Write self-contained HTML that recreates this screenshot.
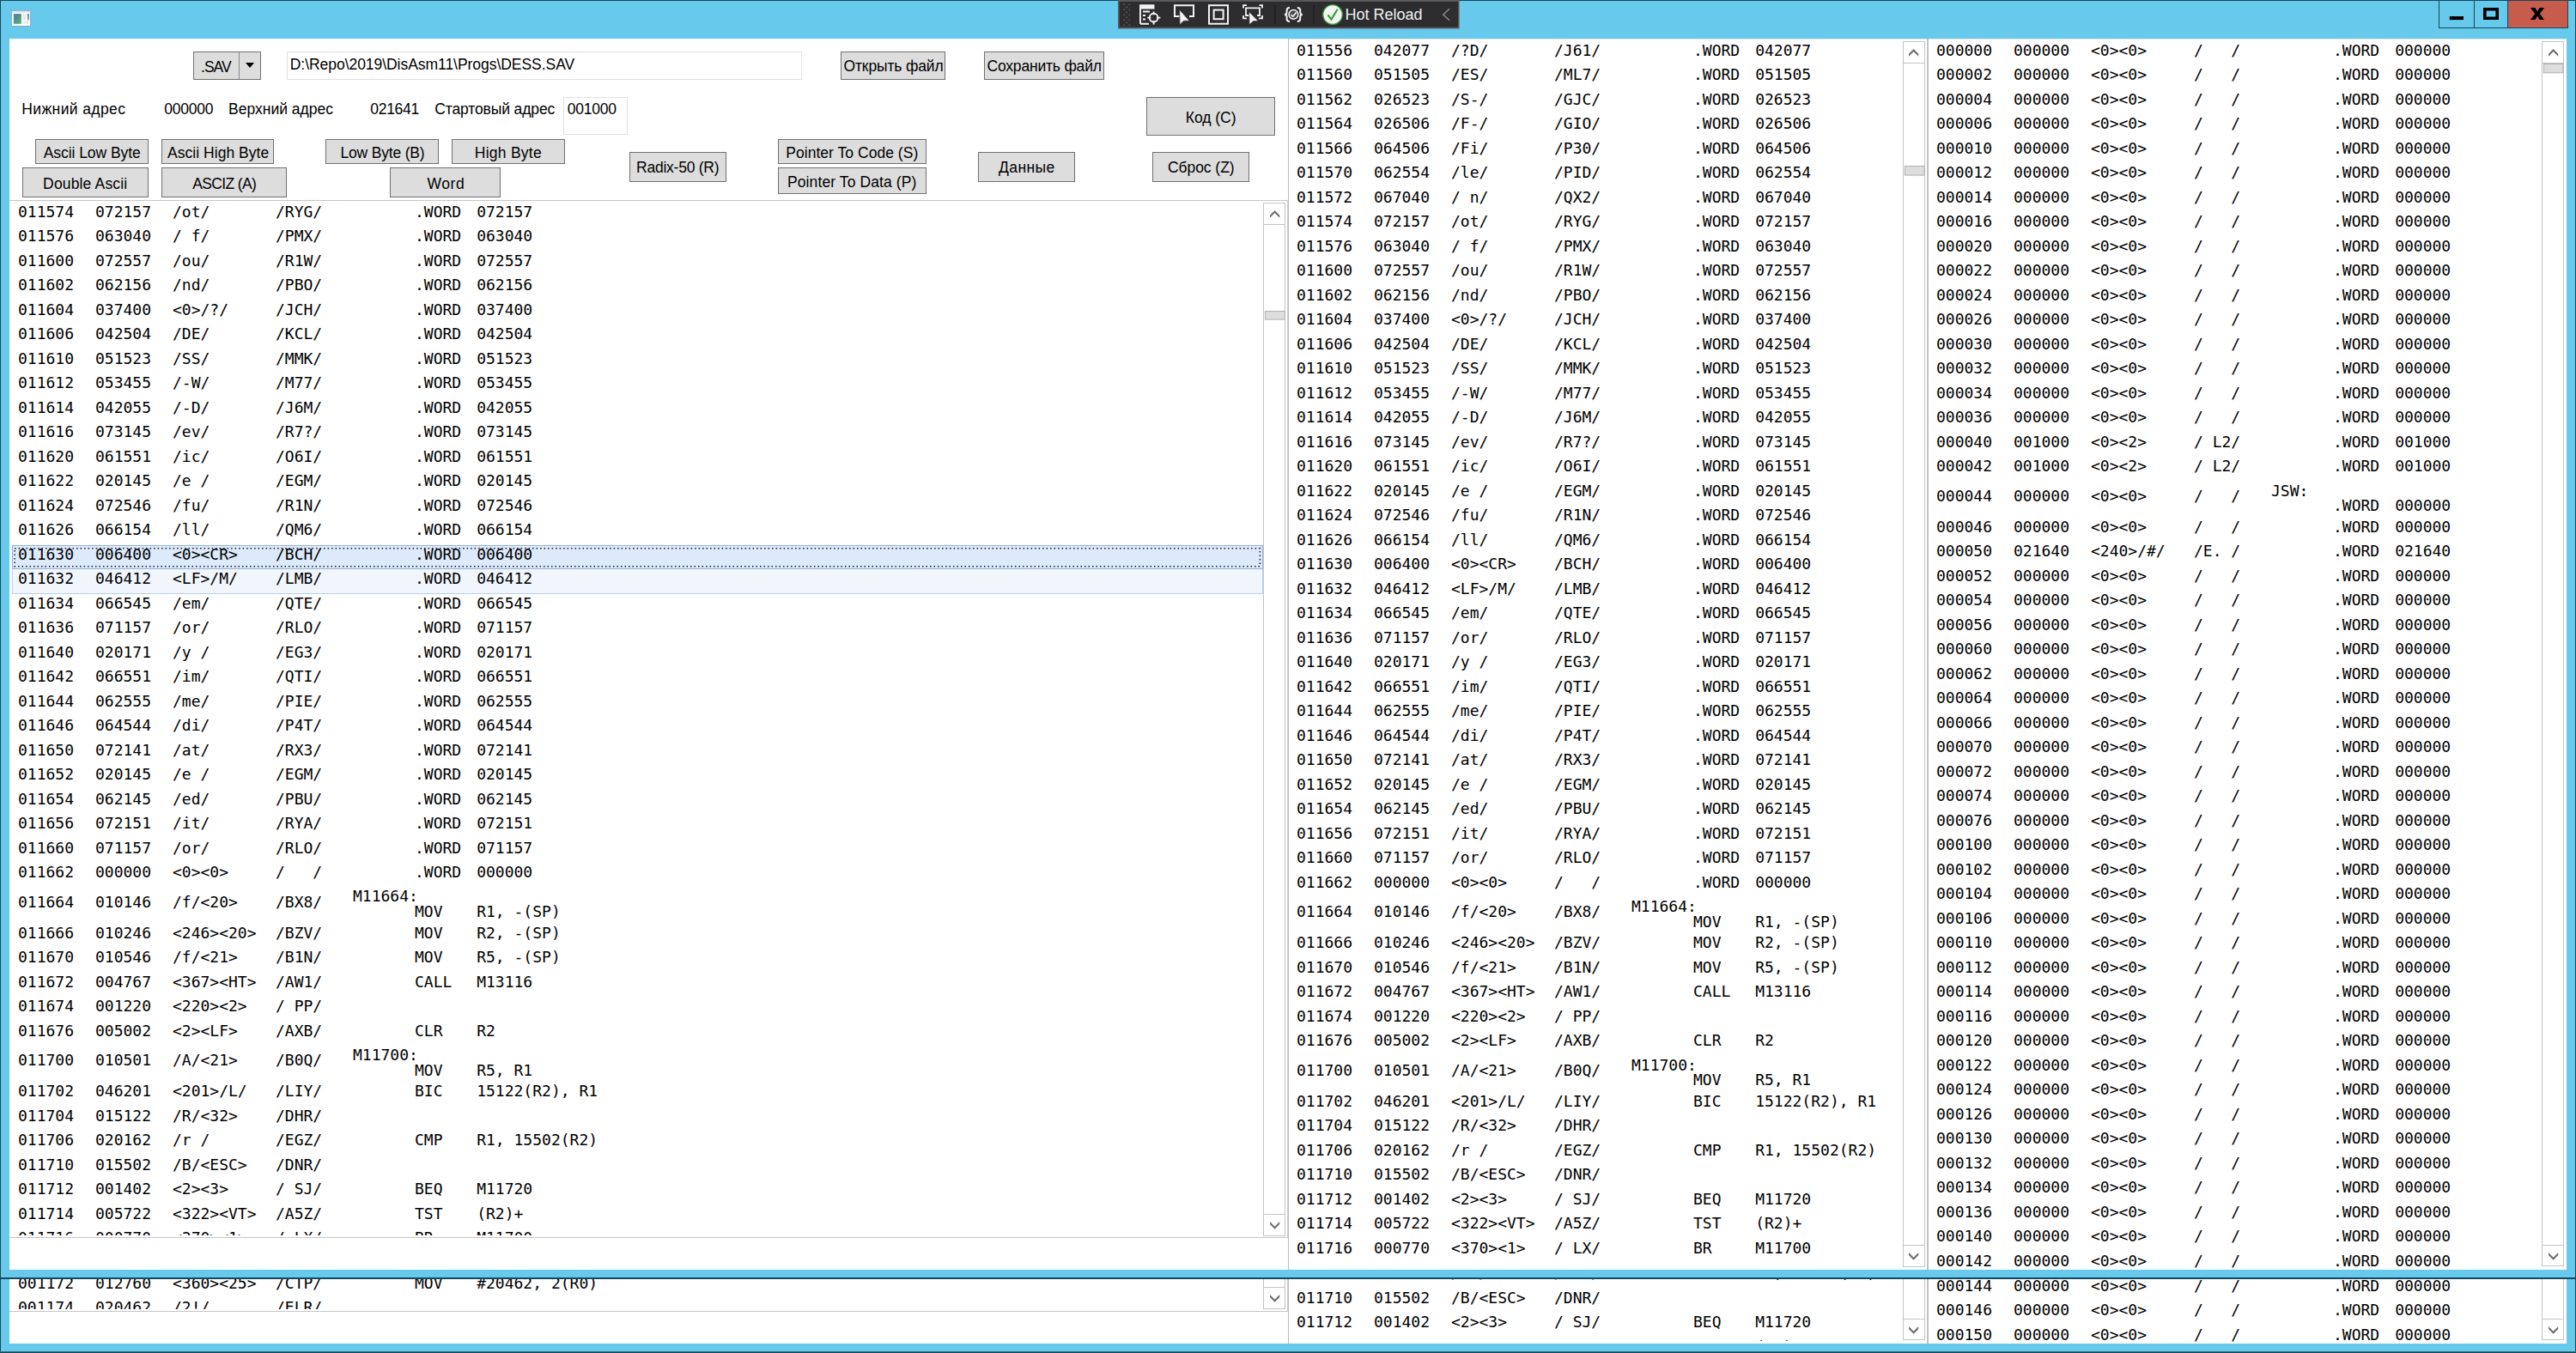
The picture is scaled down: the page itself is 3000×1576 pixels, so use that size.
<!DOCTYPE html>
<html lang="ru"><head><meta charset="utf-8"><title>DisAsm11</title>
<style>
html,body{margin:0;padding:0}
body{width:3000px;height:1576px;position:relative;overflow:hidden;background:#67C9EB;}
.a{position:absolute;box-sizing:content-box}
.s{position:absolute;white-space:pre;font-family:"Liberation Sans","DejaVu Sans",sans-serif;font-size:17.5px;line-height:22px;color:#000}
.m{position:absolute;white-space:pre;font-family:"DejaVu Sans Mono","Liberation Mono",monospace;font-size:18.015px;line-height:20px;color:#000}
.btn{background:#DDDDDD;border:1px solid #707070}

</style></head><body>
<div class="a" style="left:11px;top:1490px;width:2978px;height:75px;background:#fff;"></div>
<div class="a" style="left:11px;top:44.5px;width:2978px;height:1434.5px;background:#fff;"></div>
<div class="a" style="left:0px;top:0px;width:3000px;height:1px;background:#17475B;"></div>
<div class="a" style="left:0px;top:0px;width:1px;height:1576px;background:#17475B;"></div>
<div class="a" style="left:2999px;top:0px;width:1px;height:1576px;background:#17475B;"></div>
<div class="a" style="left:0px;top:1574px;width:3000px;height:1px;background:#376C80;"></div>
<div class="a" style="left:0px;top:1575px;width:3000px;height:1px;background:#17475B;"></div>
<div class="a" style="left:0px;top:1488.4px;width:3000px;height:1.6px;background:#17475B;"></div>
<div class="a" style="left:1500px;top:45px;width:1489px;height:1px;background:#E3E7EA;"></div>
<svg class="a" style="left:12px;top:11px" width="26" height="22" viewBox="12 11 26 22"><defs><linearGradient id="ig" x1="0" y1="0" x2="0.8" y2="1"><stop offset="0" stop-color="#5B7DAA"/><stop offset="0.45" stop-color="#4E908A"/><stop offset="1" stop-color="#62AE7E"/></linearGradient><linearGradient id="ig2" x1="0" y1="0" x2="0" y2="1"><stop offset="0" stop-color="#3E7C96"/><stop offset="1" stop-color="#70B47E"/></linearGradient></defs><rect x="13.2" y="12.1" width="22.6" height="18.6" rx="0.8" fill="#7EA9C4"/><rect x="13.9" y="12.9" width="21.2" height="17.1" fill="#FBFCFE"/><rect x="13.9" y="12.9" width="21.2" height="1.9" fill="#DDE5EE"/><rect x="15.9" y="16.1" width="8.95" height="11.7" fill="url(#ig)"/><rect x="26.4" y="16.1" width="4.4" height="6.9" fill="#EFE9ED"/><rect x="32" y="16.1" width="1.8" height="7.4" fill="url(#ig2)"/><rect x="26.4" y="24" width="7.1" height="4" fill="#EEEEEE"/></svg>
<div class="a" style="left:2920.3px;top:1px;width:69.6px;height:31.6px;background:#C75B4C;"></div>
<div class="a" style="left:2839.6px;top:0;width:149.3px;height:31.8px;border:1px solid #17475B;border-top:none"></div>
<div class="a" style="left:2880.8px;top:1px;width:1px;height:31.6px;background:#17475B;"></div>
<div class="a" style="left:2919.8px;top:1px;width:1px;height:31.6px;background:#17475B;"></div>
<svg class="a" style="left:2840px;top:0" width="152" height="34" viewBox="2840 0 152 34"><rect x="2852.8" y="19" width="16.2" height="4.1" fill="#000"/><path d="M2892 9 H2910 V23.1 H2892 Z M2895.6 12.6 V19.5 H2906.4 V12.6 Z" fill="#000" fill-rule="evenodd"/><path d="M2946.9 9 h5.5 l2.6 4.3 l2.6 -4.3 h5.5 l-5.3 7 l5.3 7.1 h-5.5 l-2.6 -4.4 l-2.6 4.4 h-5.5 l5.3 -7.1 Z" fill="#000"/></svg>
<svg class="a" style="left:0;top:0" width="3000" height="36" viewBox="0 0 3000 36">
<rect x="1302" y="0" width="397.6" height="33.4" fill="#5B5B5E"/>
<rect x="1303.7" y="1.9" width="394.4" height="29.8" fill="#2D2D30"/>
<rect x="1308.4" y="4.4" width="1.7" height="1.7" fill="#56565A"/>
<rect x="1314.4" y="4.4" width="1.7" height="1.7" fill="#56565A"/>
<rect x="1311.4" y="7.4" width="1.7" height="1.7" fill="#56565A"/>
<rect x="1308.4" y="10.4" width="1.7" height="1.7" fill="#56565A"/>
<rect x="1314.4" y="10.4" width="1.7" height="1.7" fill="#56565A"/>
<rect x="1311.4" y="13.4" width="1.7" height="1.7" fill="#56565A"/>
<rect x="1308.4" y="16.4" width="1.7" height="1.7" fill="#56565A"/>
<rect x="1314.4" y="16.4" width="1.7" height="1.7" fill="#56565A"/>
<rect x="1311.4" y="19.4" width="1.7" height="1.7" fill="#56565A"/>
<rect x="1308.4" y="22.4" width="1.7" height="1.7" fill="#56565A"/>
<rect x="1314.4" y="22.4" width="1.7" height="1.7" fill="#56565A"/>
<rect x="1311.4" y="25.4" width="1.7" height="1.7" fill="#56565A"/>
<rect x="1308.4" y="28.4" width="1.7" height="1.7" fill="#56565A"/>
<rect x="1314.4" y="28.4" width="1.7" height="1.7" fill="#56565A"/>
<g fill="none" stroke="#F3F3F3" stroke-width="1.9"><path d="M1328 27.7 V6.2 H1343.5 V9.5 H1328 M1328 27.7 H1338"/><path d="M1331 13.5 H1339 M1331 18 H1334 M1331 22.5 H1334"/><circle cx="1343.6" cy="20.6" r="4.9"/><path d="M1343.6 13.4 V17.2 M1343.6 24 V28.6 M1336.2 20.6 H1340.2 M1347 20.6 H1351.4"/></g><rect x="1328" y="6.2" width="15.5" height="3.3" fill="#F3F3F3"/>
<path d="M1376 19 H1368 V6.2 H1390 V19 H1385" fill="none" stroke="#F3F3F3" stroke-width="2"/><path d="M1373.6 11.2 L1385.2 24.2 L1378.4 24.4 L1374 28.8 Z" fill="#F3F3F3" stroke="#2D2D30" stroke-width="0.8"/>
<rect x="1408" y="6.2" width="22" height="21.5" fill="none" stroke="#F3F3F3" stroke-width="2"/><rect x="1413.6" y="11.6" width="11" height="10.6" fill="none" stroke="#F3F3F3" stroke-width="2"/>
<g fill="none" stroke="#F3F3F3" stroke-width="1.8"><path d="M1448 9.5 V6.2 H1452 M1466.5 6.2 H1470 V9.5 M1470 18 V21.3 H1466 M1452 21.3 H1448 V18"/><path d="M1456 18 H1451 V9.4 H1467 V18 H1464"/></g><path d="M1454.6 13.6 L1465.4 24.6 L1459.4 24.8 L1455 28.8 Z" fill="#F3F3F3" stroke="#2D2D30" stroke-width="0.8"/>
<rect x="1484.2" y="6" width="1.4" height="21.5" fill="#1F1F22"/>
<rect x="1529.2" y="6" width="1.4" height="21.5" fill="#1F1F22"/>
<g fill="none" stroke="#F3F3F3" stroke-width="2"><path d="M1502 8.9 Q1498.6 8.9 1498.6 11.8 V14.2 Q1498.6 16.9 1496 16.9 Q1498.6 16.9 1498.6 19.6 V22 Q1498.6 24.9 1502 24.9"/><path d="M1510.8 8.9 Q1514.2 8.9 1514.2 11.8 V14.2 Q1514.2 16.9 1516.8 16.9 Q1514.2 16.9 1514.2 19.6 V22 Q1514.2 24.9 1510.8 24.9"/><circle cx="1506.4" cy="16.9" r="5.3" stroke-width="1.7"/></g><circle cx="1506.4" cy="16.9" r="4.4" fill="#4A4A4E"/><path d="M1503.5 17 L1505.7 19.2 L1509.6 14.4" fill="none" stroke="#F3F3F3" stroke-width="1.6"/>
<circle cx="1552" cy="17" r="11.3" fill="#F4F4F4" stroke="#3C9A3C" stroke-width="1.3"/><path d="M1546.4 17.4 L1550.5 22.6 L1557.6 10.8" fill="none" stroke="#2E9E2E" stroke-width="2.1"/>
<path d="M1688 10.2 L1680.8 17 L1688 23.8" fill="none" stroke="#8A8A8E" stroke-width="1.5"/>
</svg>
<span class="s" style="left:1566.6px;top:6.15px;letter-spacing:-0.016px;color:#F1F1F1;font-size:18px;line-height:22.6286px;">Hot Reload</span>
<div class="a btn" style="left:225px;top:60px;width:77px;height:30.5px"></div>
<div class="a" style="left:278px;top:61px;width:1px;height:30.5px;background:#8A8A8A;"></div>
<svg class="a" style="left:285px;top:72px" width="12" height="8" viewBox="0 0 12 8"><path d="M1 1 H11 L6 7 Z" fill="#000"/></svg>
<span class="s" style="left:234px;top:66.64px;letter-spacing:-0.969px;">.SAV</span>
<div class="a" style="left:333.8px;top:60px;width:598px;height:30.5px;border:1px solid #E1E1E1;background:#fff"></div>
<span class="s" style="left:337.75px;top:64.14px;letter-spacing:-0.044px;">D:\Repo\2019\DisAsm11\Progs\DESS.SAV</span>
<div class="a btn" style="left:979.25px;top:60px;width:119.5px;height:30.5px"></div>
<span class="s" style="left:982.5px;top:66.34px;letter-spacing:-0.136px;">Открыть файл</span>
<div class="a btn" style="left:1146.25px;top:60px;width:137.5px;height:30.5px"></div>
<span class="s" style="left:1149.5px;top:66.34px;letter-spacing:-0.191px;">Сохранить файл</span>
<span class="s" style="left:25.25px;top:115.54px;letter-spacing:0.399px;">Нижний адрес</span>
<span class="s" style="left:191.25px;top:115.54px;letter-spacing:-0.233px;">000000</span>
<span class="s" style="left:266px;top:115.54px;letter-spacing:0.006px;">Верхний адрес</span>
<span class="s" style="left:431.25px;top:115.54px;letter-spacing:-0.283px;">021641</span>
<span class="s" style="left:506.25px;top:115.54px;letter-spacing:-0.126px;">Стартовый адрес</span>
<div class="a" style="left:656.25px;top:113.25px;width:72.5px;height:42px;border:1px solid #E1E1E1;background:#fff"></div>
<span class="s" style="left:660.75px;top:116.04px;letter-spacing:-0.233px;">001000</span>
<div class="a btn" style="left:1335.25px;top:113.25px;width:147.5px;height:42.25px"></div>
<span class="s" style="left:1380.75px;top:125.54px;letter-spacing:-0.014px;">Код (C)</span>
<div class="a btn" style="left:41.25px;top:161.75px;width:129.25px;height:27.5px"></div>
<span class="s" style="left:50.75px;top:167.24px;letter-spacing:-0.062px;">Ascii Low Byte</span>
<div class="a btn" style="left:188.25px;top:161.75px;width:128.5px;height:27.5px"></div>
<span class="s" style="left:195px;top:167.24px;letter-spacing:0.039px;">Ascii High Byte</span>
<div class="a btn" style="left:379.25px;top:161.75px;width:129.5px;height:27.5px"></div>
<span class="s" style="left:396.5px;top:167.24px;letter-spacing:-0.190px;">Low Byte (B)</span>
<div class="a btn" style="left:526.25px;top:161.75px;width:129.25px;height:27.5px"></div>
<span class="s" style="left:552.75px;top:167.24px;letter-spacing:0.264px;">High Byte</span>
<div class="a btn" style="left:26.25px;top:195.4px;width:144.25px;height:32.2px"></div>
<span class="s" style="left:50.1px;top:202.94px;letter-spacing:0.161px;">Double Ascii</span>
<div class="a btn" style="left:188.25px;top:195.4px;width:143.5px;height:32.2px"></div>
<span class="s" style="left:224.25px;top:202.94px;letter-spacing:-0.643px;">ASCIZ (A)</span>
<div class="a btn" style="left:454.25px;top:195.4px;width:126.75px;height:32.2px"></div>
<span class="s" style="left:497.5px;top:202.94px;letter-spacing:0.580px;">Word</span>
<div class="a btn" style="left:733.25px;top:176.5px;width:110.5px;height:33px"></div>
<span class="s" style="left:741px;top:184.34px;letter-spacing:-0.237px;">Radix-50 (R)</span>
<div class="a btn" style="left:906.25px;top:161.75px;width:170.5px;height:27.5px"></div>
<span class="s" style="left:915.25px;top:167.24px;letter-spacing:0.036px;">Pointer To Code (S)</span>
<div class="a btn" style="left:906.25px;top:195.4px;width:170.5px;height:28.9px"></div>
<span class="s" style="left:917px;top:201.14px;letter-spacing:0.098px;">Pointer To Data (P)</span>
<div class="a btn" style="left:1139.25px;top:176.5px;width:110.5px;height:33px"></div>
<span class="s" style="left:1163px;top:184.34px;letter-spacing:0.402px;">Данные</span>
<div class="a btn" style="left:1342.25px;top:176.5px;width:110.5px;height:33px"></div>
<span class="s" style="left:1360px;top:184.34px;letter-spacing:-0.063px;">Сброс (Z)</span>
<div class="a" style="left:11px;top:233px;width:1489px;height:1px;background:#C6C6C6;"></div>
<div class="a" style="left:11px;top:1441px;width:1489px;height:1px;background:#C6C6C6;"></div>
<div class="a" style="left:11px;top:234px;width:1460px;height:1205px;overflow:hidden;">
<div class="a" style="left:3px;top:400.75px;width:1455px;height:26.5px;background:#DCEAFB;border:1px solid #94B3DE"></div>
<svg class="a" style="left:3px;top:400.75px" width="1460" height="30" viewBox="14 634.75 1460 30"><rect x="17.1" y="638.6" width="1450.3" height="20.8" fill="none" stroke="#15181C" stroke-width="1.5" stroke-dasharray="1.5 3"/></svg>
<div class="a" style="left:3px;top:429.25px;width:1455px;height:28px;background:#F1F6FD;border:1px solid #BBD0EC;border-top:none"></div>
<span class="m" style="left:10.00px;top:2.51px">011574</span>
<span class="m" style="left:100.00px;top:2.51px">072157</span>
<span class="m" style="left:190.00px;top:2.51px">/ot/</span>
<span class="m" style="left:310.00px;top:2.51px">/RYG/</span>
<span class="m" style="left:472.00px;top:2.51px">.WORD</span>
<span class="m" style="left:544.20px;top:2.51px">072157</span>
<span class="m" style="left:10.00px;top:31.01px">011576</span>
<span class="m" style="left:100.00px;top:31.01px">063040</span>
<span class="m" style="left:190.00px;top:31.01px">/ f/</span>
<span class="m" style="left:310.00px;top:31.01px">/PMX/</span>
<span class="m" style="left:472.00px;top:31.01px">.WORD</span>
<span class="m" style="left:544.20px;top:31.01px">063040</span>
<span class="m" style="left:10.00px;top:59.51px">011600</span>
<span class="m" style="left:100.00px;top:59.51px">072557</span>
<span class="m" style="left:190.00px;top:59.51px">/ou/</span>
<span class="m" style="left:310.00px;top:59.51px">/R1W/</span>
<span class="m" style="left:472.00px;top:59.51px">.WORD</span>
<span class="m" style="left:544.20px;top:59.51px">072557</span>
<span class="m" style="left:10.00px;top:88.01px">011602</span>
<span class="m" style="left:100.00px;top:88.01px">062156</span>
<span class="m" style="left:190.00px;top:88.01px">/nd/</span>
<span class="m" style="left:310.00px;top:88.01px">/PBO/</span>
<span class="m" style="left:472.00px;top:88.01px">.WORD</span>
<span class="m" style="left:544.20px;top:88.01px">062156</span>
<span class="m" style="left:10.00px;top:116.51px">011604</span>
<span class="m" style="left:100.00px;top:116.51px">037400</span>
<span class="m" style="left:190.00px;top:116.51px">&lt;0&gt;/?/</span>
<span class="m" style="left:310.00px;top:116.51px">/JCH/</span>
<span class="m" style="left:472.00px;top:116.51px">.WORD</span>
<span class="m" style="left:544.20px;top:116.51px">037400</span>
<span class="m" style="left:10.00px;top:145.01px">011606</span>
<span class="m" style="left:100.00px;top:145.01px">042504</span>
<span class="m" style="left:190.00px;top:145.01px">/DE/</span>
<span class="m" style="left:310.00px;top:145.01px">/KCL/</span>
<span class="m" style="left:472.00px;top:145.01px">.WORD</span>
<span class="m" style="left:544.20px;top:145.01px">042504</span>
<span class="m" style="left:10.00px;top:173.51px">011610</span>
<span class="m" style="left:100.00px;top:173.51px">051523</span>
<span class="m" style="left:190.00px;top:173.51px">/SS/</span>
<span class="m" style="left:310.00px;top:173.51px">/MMK/</span>
<span class="m" style="left:472.00px;top:173.51px">.WORD</span>
<span class="m" style="left:544.20px;top:173.51px">051523</span>
<span class="m" style="left:10.00px;top:202.01px">011612</span>
<span class="m" style="left:100.00px;top:202.01px">053455</span>
<span class="m" style="left:190.00px;top:202.01px">/-W/</span>
<span class="m" style="left:310.00px;top:202.01px">/M77/</span>
<span class="m" style="left:472.00px;top:202.01px">.WORD</span>
<span class="m" style="left:544.20px;top:202.01px">053455</span>
<span class="m" style="left:10.00px;top:230.51px">011614</span>
<span class="m" style="left:100.00px;top:230.51px">042055</span>
<span class="m" style="left:190.00px;top:230.51px">/-D/</span>
<span class="m" style="left:310.00px;top:230.51px">/J6M/</span>
<span class="m" style="left:472.00px;top:230.51px">.WORD</span>
<span class="m" style="left:544.20px;top:230.51px">042055</span>
<span class="m" style="left:10.00px;top:259.01px">011616</span>
<span class="m" style="left:100.00px;top:259.01px">073145</span>
<span class="m" style="left:190.00px;top:259.01px">/ev/</span>
<span class="m" style="left:310.00px;top:259.01px">/R7?/</span>
<span class="m" style="left:472.00px;top:259.01px">.WORD</span>
<span class="m" style="left:544.20px;top:259.01px">073145</span>
<span class="m" style="left:10.00px;top:287.51px">011620</span>
<span class="m" style="left:100.00px;top:287.51px">061551</span>
<span class="m" style="left:190.00px;top:287.51px">/ic/</span>
<span class="m" style="left:310.00px;top:287.51px">/O6I/</span>
<span class="m" style="left:472.00px;top:287.51px">.WORD</span>
<span class="m" style="left:544.20px;top:287.51px">061551</span>
<span class="m" style="left:10.00px;top:316.01px">011622</span>
<span class="m" style="left:100.00px;top:316.01px">020145</span>
<span class="m" style="left:190.00px;top:316.01px">/e /</span>
<span class="m" style="left:310.00px;top:316.01px">/EGM/</span>
<span class="m" style="left:472.00px;top:316.01px">.WORD</span>
<span class="m" style="left:544.20px;top:316.01px">020145</span>
<span class="m" style="left:10.00px;top:344.51px">011624</span>
<span class="m" style="left:100.00px;top:344.51px">072546</span>
<span class="m" style="left:190.00px;top:344.51px">/fu/</span>
<span class="m" style="left:310.00px;top:344.51px">/R1N/</span>
<span class="m" style="left:472.00px;top:344.51px">.WORD</span>
<span class="m" style="left:544.20px;top:344.51px">072546</span>
<span class="m" style="left:10.00px;top:373.01px">011626</span>
<span class="m" style="left:100.00px;top:373.01px">066154</span>
<span class="m" style="left:190.00px;top:373.01px">/ll/</span>
<span class="m" style="left:310.00px;top:373.01px">/QM6/</span>
<span class="m" style="left:472.00px;top:373.01px">.WORD</span>
<span class="m" style="left:544.20px;top:373.01px">066154</span>
<span class="m" style="left:10.00px;top:401.51px">011630</span>
<span class="m" style="left:100.00px;top:401.51px">006400</span>
<span class="m" style="left:190.00px;top:401.51px">&lt;0&gt;&lt;CR&gt;</span>
<span class="m" style="left:310.00px;top:401.51px">/BCH/</span>
<span class="m" style="left:472.00px;top:401.51px">.WORD</span>
<span class="m" style="left:544.20px;top:401.51px">006400</span>
<span class="m" style="left:10.00px;top:430.01px">011632</span>
<span class="m" style="left:100.00px;top:430.01px">046412</span>
<span class="m" style="left:190.00px;top:430.01px">&lt;LF&gt;/M/</span>
<span class="m" style="left:310.00px;top:430.01px">/LMB/</span>
<span class="m" style="left:472.00px;top:430.01px">.WORD</span>
<span class="m" style="left:544.20px;top:430.01px">046412</span>
<span class="m" style="left:10.00px;top:458.51px">011634</span>
<span class="m" style="left:100.00px;top:458.51px">066545</span>
<span class="m" style="left:190.00px;top:458.51px">/em/</span>
<span class="m" style="left:310.00px;top:458.51px">/QTE/</span>
<span class="m" style="left:472.00px;top:458.51px">.WORD</span>
<span class="m" style="left:544.20px;top:458.51px">066545</span>
<span class="m" style="left:10.00px;top:487.01px">011636</span>
<span class="m" style="left:100.00px;top:487.01px">071157</span>
<span class="m" style="left:190.00px;top:487.01px">/or/</span>
<span class="m" style="left:310.00px;top:487.01px">/RLO/</span>
<span class="m" style="left:472.00px;top:487.01px">.WORD</span>
<span class="m" style="left:544.20px;top:487.01px">071157</span>
<span class="m" style="left:10.00px;top:515.51px">011640</span>
<span class="m" style="left:100.00px;top:515.51px">020171</span>
<span class="m" style="left:190.00px;top:515.51px">/y /</span>
<span class="m" style="left:310.00px;top:515.51px">/EG3/</span>
<span class="m" style="left:472.00px;top:515.51px">.WORD</span>
<span class="m" style="left:544.20px;top:515.51px">020171</span>
<span class="m" style="left:10.00px;top:544.01px">011642</span>
<span class="m" style="left:100.00px;top:544.01px">066551</span>
<span class="m" style="left:190.00px;top:544.01px">/im/</span>
<span class="m" style="left:310.00px;top:544.01px">/QTI/</span>
<span class="m" style="left:472.00px;top:544.01px">.WORD</span>
<span class="m" style="left:544.20px;top:544.01px">066551</span>
<span class="m" style="left:10.00px;top:572.51px">011644</span>
<span class="m" style="left:100.00px;top:572.51px">062555</span>
<span class="m" style="left:190.00px;top:572.51px">/me/</span>
<span class="m" style="left:310.00px;top:572.51px">/PIE/</span>
<span class="m" style="left:472.00px;top:572.51px">.WORD</span>
<span class="m" style="left:544.20px;top:572.51px">062555</span>
<span class="m" style="left:10.00px;top:601.01px">011646</span>
<span class="m" style="left:100.00px;top:601.01px">064544</span>
<span class="m" style="left:190.00px;top:601.01px">/di/</span>
<span class="m" style="left:310.00px;top:601.01px">/P4T/</span>
<span class="m" style="left:472.00px;top:601.01px">.WORD</span>
<span class="m" style="left:544.20px;top:601.01px">064544</span>
<span class="m" style="left:10.00px;top:629.51px">011650</span>
<span class="m" style="left:100.00px;top:629.51px">072141</span>
<span class="m" style="left:190.00px;top:629.51px">/at/</span>
<span class="m" style="left:310.00px;top:629.51px">/RX3/</span>
<span class="m" style="left:472.00px;top:629.51px">.WORD</span>
<span class="m" style="left:544.20px;top:629.51px">072141</span>
<span class="m" style="left:10.00px;top:658.01px">011652</span>
<span class="m" style="left:100.00px;top:658.01px">020145</span>
<span class="m" style="left:190.00px;top:658.01px">/e /</span>
<span class="m" style="left:310.00px;top:658.01px">/EGM/</span>
<span class="m" style="left:472.00px;top:658.01px">.WORD</span>
<span class="m" style="left:544.20px;top:658.01px">020145</span>
<span class="m" style="left:10.00px;top:686.51px">011654</span>
<span class="m" style="left:100.00px;top:686.51px">062145</span>
<span class="m" style="left:190.00px;top:686.51px">/ed/</span>
<span class="m" style="left:310.00px;top:686.51px">/PBU/</span>
<span class="m" style="left:472.00px;top:686.51px">.WORD</span>
<span class="m" style="left:544.20px;top:686.51px">062145</span>
<span class="m" style="left:10.00px;top:715.01px">011656</span>
<span class="m" style="left:100.00px;top:715.01px">072151</span>
<span class="m" style="left:190.00px;top:715.01px">/it/</span>
<span class="m" style="left:310.00px;top:715.01px">/RYA/</span>
<span class="m" style="left:472.00px;top:715.01px">.WORD</span>
<span class="m" style="left:544.20px;top:715.01px">072151</span>
<span class="m" style="left:10.00px;top:743.51px">011660</span>
<span class="m" style="left:100.00px;top:743.51px">071157</span>
<span class="m" style="left:190.00px;top:743.51px">/or/</span>
<span class="m" style="left:310.00px;top:743.51px">/RLO/</span>
<span class="m" style="left:472.00px;top:743.51px">.WORD</span>
<span class="m" style="left:544.20px;top:743.51px">071157</span>
<span class="m" style="left:10.00px;top:772.01px">011662</span>
<span class="m" style="left:100.00px;top:772.01px">000000</span>
<span class="m" style="left:190.00px;top:772.01px">&lt;0&gt;&lt;0&gt;</span>
<span class="m" style="left:310.00px;top:772.01px">/   /</span>
<span class="m" style="left:472.00px;top:772.01px">.WORD</span>
<span class="m" style="left:544.20px;top:772.01px">000000</span>
<span class="m" style="left:10.00px;top:806.81px">011664</span>
<span class="m" style="left:100.00px;top:806.81px">010146</span>
<span class="m" style="left:190.00px;top:806.81px">/f/&lt;20&gt;</span>
<span class="m" style="left:310.00px;top:806.81px">/BX8/</span>
<span class="m" style="left:400.00px;top:800.41px">M11664:</span>
<span class="m" style="left:472.00px;top:818.21px">MOV</span>
<span class="m" style="left:544.20px;top:818.21px">R1, -(SP)</span>
<span class="m" style="left:10.00px;top:842.51px">011666</span>
<span class="m" style="left:100.00px;top:842.51px">010246</span>
<span class="m" style="left:190.00px;top:842.51px">&lt;246&gt;&lt;20&gt;</span>
<span class="m" style="left:310.00px;top:842.51px">/BZV/</span>
<span class="m" style="left:472.00px;top:842.51px">MOV</span>
<span class="m" style="left:544.20px;top:842.51px">R2, -(SP)</span>
<span class="m" style="left:10.00px;top:871.01px">011670</span>
<span class="m" style="left:100.00px;top:871.01px">010546</span>
<span class="m" style="left:190.00px;top:871.01px">/f/&lt;21&gt;</span>
<span class="m" style="left:310.00px;top:871.01px">/B1N/</span>
<span class="m" style="left:472.00px;top:871.01px">MOV</span>
<span class="m" style="left:544.20px;top:871.01px">R5, -(SP)</span>
<span class="m" style="left:10.00px;top:899.51px">011672</span>
<span class="m" style="left:100.00px;top:899.51px">004767</span>
<span class="m" style="left:190.00px;top:899.51px">&lt;367&gt;&lt;HT&gt;</span>
<span class="m" style="left:310.00px;top:899.51px">/AW1/</span>
<span class="m" style="left:472.00px;top:899.51px">CALL</span>
<span class="m" style="left:544.20px;top:899.51px">M13116</span>
<span class="m" style="left:10.00px;top:928.01px">011674</span>
<span class="m" style="left:100.00px;top:928.01px">001220</span>
<span class="m" style="left:190.00px;top:928.01px">&lt;220&gt;&lt;2&gt;</span>
<span class="m" style="left:310.00px;top:928.01px">/ PP/</span>
<span class="m" style="left:10.00px;top:956.51px">011676</span>
<span class="m" style="left:100.00px;top:956.51px">005002</span>
<span class="m" style="left:190.00px;top:956.51px">&lt;2&gt;&lt;LF&gt;</span>
<span class="m" style="left:310.00px;top:956.51px">/AXB/</span>
<span class="m" style="left:472.00px;top:956.51px">CLR</span>
<span class="m" style="left:544.20px;top:956.51px">R2</span>
<span class="m" style="left:10.00px;top:991.31px">011700</span>
<span class="m" style="left:100.00px;top:991.31px">010501</span>
<span class="m" style="left:190.00px;top:991.31px">/A/&lt;21&gt;</span>
<span class="m" style="left:310.00px;top:991.31px">/B0Q/</span>
<span class="m" style="left:400.00px;top:984.91px">M11700:</span>
<span class="m" style="left:472.00px;top:1002.71px">MOV</span>
<span class="m" style="left:544.20px;top:1002.71px">R5, R1</span>
<span class="m" style="left:10.00px;top:1027.01px">011702</span>
<span class="m" style="left:100.00px;top:1027.01px">046201</span>
<span class="m" style="left:190.00px;top:1027.01px">&lt;201&gt;/L/</span>
<span class="m" style="left:310.00px;top:1027.01px">/LIY/</span>
<span class="m" style="left:472.00px;top:1027.01px">BIC</span>
<span class="m" style="left:544.20px;top:1027.01px">15122(R2), R1</span>
<span class="m" style="left:10.00px;top:1055.51px">011704</span>
<span class="m" style="left:100.00px;top:1055.51px">015122</span>
<span class="m" style="left:190.00px;top:1055.51px">/R/&lt;32&gt;</span>
<span class="m" style="left:310.00px;top:1055.51px">/DHR/</span>
<span class="m" style="left:10.00px;top:1084.01px">011706</span>
<span class="m" style="left:100.00px;top:1084.01px">020162</span>
<span class="m" style="left:190.00px;top:1084.01px">/r /</span>
<span class="m" style="left:310.00px;top:1084.01px">/EGZ/</span>
<span class="m" style="left:472.00px;top:1084.01px">CMP</span>
<span class="m" style="left:544.20px;top:1084.01px">R1, 15502(R2)</span>
<span class="m" style="left:10.00px;top:1112.51px">011710</span>
<span class="m" style="left:100.00px;top:1112.51px">015502</span>
<span class="m" style="left:190.00px;top:1112.51px">/B/&lt;ESC&gt;</span>
<span class="m" style="left:310.00px;top:1112.51px">/DNR/</span>
<span class="m" style="left:10.00px;top:1141.01px">011712</span>
<span class="m" style="left:100.00px;top:1141.01px">001402</span>
<span class="m" style="left:190.00px;top:1141.01px">&lt;2&gt;&lt;3&gt;</span>
<span class="m" style="left:310.00px;top:1141.01px">/ SJ/</span>
<span class="m" style="left:472.00px;top:1141.01px">BEQ</span>
<span class="m" style="left:544.20px;top:1141.01px">M11720</span>
<span class="m" style="left:10.00px;top:1169.51px">011714</span>
<span class="m" style="left:100.00px;top:1169.51px">005722</span>
<span class="m" style="left:190.00px;top:1169.51px">&lt;322&gt;&lt;VT&gt;</span>
<span class="m" style="left:310.00px;top:1169.51px">/A5Z/</span>
<span class="m" style="left:472.00px;top:1169.51px">TST</span>
<span class="m" style="left:544.20px;top:1169.51px">(R2)+</span>
<span class="m" style="left:10.00px;top:1198.01px">011716</span>
<span class="m" style="left:100.00px;top:1198.01px">000770</span>
<span class="m" style="left:190.00px;top:1198.01px">&lt;370&gt;&lt;1&gt;</span>
<span class="m" style="left:310.00px;top:1198.01px">/ LX/</span>
<span class="m" style="left:472.00px;top:1198.01px">BR</span>
<span class="m" style="left:544.20px;top:1198.01px">M11700</span>
</div>
<div class="a" style="left:1471px;top:236px;width:24px;height:1201.6px;border-left:1px solid #C4C4C4;border-right:1px solid #C4C4C4;border-top:1px solid #C4C4C4;border-bottom:1px solid #C4C4C4;background:#fff"></div>
<div class="a" style="left:1471px;top:261px;width:26px;height:1px;background:#C4C4C4"></div>
<svg class="a" style="left:1478.75px;top:244.95px" width="12" height="9" viewBox="0 0 12 9"><polygon points="0.00,5.70 5.60,0.00 11.20,5.70 11.20,8.70 5.60,3.00 0.00,8.70" fill="#6B6B6B"/></svg>
<div class="a" style="left:1471px;top:1413.6px;width:26px;height:1px;background:#C4C4C4"></div>
<svg class="a" style="left:1478.75px;top:1423.15px" width="12" height="9" viewBox="0 0 12 9"><polygon points="0.00,0.00 5.60,5.70 11.20,0.00 11.20,3.00 5.60,8.70 0.00,3.00" fill="#6B6B6B"/></svg>
<svg class="a" style="left:1471px;top:361px" width="27" height="12.6" viewBox="0 0 27 12.6"><rect x="2.4" y="1.5" width="23.1" height="9.6" fill="#DDDDDD" stroke="#B0B0B0" stroke-width="1"/></svg>
<div class="a" style="left:1500px;top:45px;width:1px;height:1434px;background:#BDBDBD;"></div>
<div class="a" style="left:1499px;top:233px;width:1px;height:1208.5px;background:#CCCCCC;"></div>
<div class="a" style="left:1501px;top:45px;width:715px;height:1434px;overflow:hidden;">
<span class="m" style="left:9.00px;top:3.61px">011556</span>
<span class="m" style="left:99.00px;top:3.61px">042077</span>
<span class="m" style="left:189.00px;top:3.61px">/?D/</span>
<span class="m" style="left:309.00px;top:3.61px">/J61/</span>
<span class="m" style="left:471.00px;top:3.61px">.WORD</span>
<span class="m" style="left:543.20px;top:3.61px">042077</span>
<span class="m" style="left:9.00px;top:32.11px">011560</span>
<span class="m" style="left:99.00px;top:32.11px">051505</span>
<span class="m" style="left:189.00px;top:32.11px">/ES/</span>
<span class="m" style="left:309.00px;top:32.11px">/ML7/</span>
<span class="m" style="left:471.00px;top:32.11px">.WORD</span>
<span class="m" style="left:543.20px;top:32.11px">051505</span>
<span class="m" style="left:9.00px;top:60.61px">011562</span>
<span class="m" style="left:99.00px;top:60.61px">026523</span>
<span class="m" style="left:189.00px;top:60.61px">/S-/</span>
<span class="m" style="left:309.00px;top:60.61px">/GJC/</span>
<span class="m" style="left:471.00px;top:60.61px">.WORD</span>
<span class="m" style="left:543.20px;top:60.61px">026523</span>
<span class="m" style="left:9.00px;top:89.11px">011564</span>
<span class="m" style="left:99.00px;top:89.11px">026506</span>
<span class="m" style="left:189.00px;top:89.11px">/F-/</span>
<span class="m" style="left:309.00px;top:89.11px">/GIO/</span>
<span class="m" style="left:471.00px;top:89.11px">.WORD</span>
<span class="m" style="left:543.20px;top:89.11px">026506</span>
<span class="m" style="left:9.00px;top:117.61px">011566</span>
<span class="m" style="left:99.00px;top:117.61px">064506</span>
<span class="m" style="left:189.00px;top:117.61px">/Fi/</span>
<span class="m" style="left:309.00px;top:117.61px">/P30/</span>
<span class="m" style="left:471.00px;top:117.61px">.WORD</span>
<span class="m" style="left:543.20px;top:117.61px">064506</span>
<span class="m" style="left:9.00px;top:146.11px">011570</span>
<span class="m" style="left:99.00px;top:146.11px">062554</span>
<span class="m" style="left:189.00px;top:146.11px">/le/</span>
<span class="m" style="left:309.00px;top:146.11px">/PID/</span>
<span class="m" style="left:471.00px;top:146.11px">.WORD</span>
<span class="m" style="left:543.20px;top:146.11px">062554</span>
<span class="m" style="left:9.00px;top:174.61px">011572</span>
<span class="m" style="left:99.00px;top:174.61px">067040</span>
<span class="m" style="left:189.00px;top:174.61px">/ n/</span>
<span class="m" style="left:309.00px;top:174.61px">/QX2/</span>
<span class="m" style="left:471.00px;top:174.61px">.WORD</span>
<span class="m" style="left:543.20px;top:174.61px">067040</span>
<span class="m" style="left:9.00px;top:203.11px">011574</span>
<span class="m" style="left:99.00px;top:203.11px">072157</span>
<span class="m" style="left:189.00px;top:203.11px">/ot/</span>
<span class="m" style="left:309.00px;top:203.11px">/RYG/</span>
<span class="m" style="left:471.00px;top:203.11px">.WORD</span>
<span class="m" style="left:543.20px;top:203.11px">072157</span>
<span class="m" style="left:9.00px;top:231.61px">011576</span>
<span class="m" style="left:99.00px;top:231.61px">063040</span>
<span class="m" style="left:189.00px;top:231.61px">/ f/</span>
<span class="m" style="left:309.00px;top:231.61px">/PMX/</span>
<span class="m" style="left:471.00px;top:231.61px">.WORD</span>
<span class="m" style="left:543.20px;top:231.61px">063040</span>
<span class="m" style="left:9.00px;top:260.11px">011600</span>
<span class="m" style="left:99.00px;top:260.11px">072557</span>
<span class="m" style="left:189.00px;top:260.11px">/ou/</span>
<span class="m" style="left:309.00px;top:260.11px">/R1W/</span>
<span class="m" style="left:471.00px;top:260.11px">.WORD</span>
<span class="m" style="left:543.20px;top:260.11px">072557</span>
<span class="m" style="left:9.00px;top:288.61px">011602</span>
<span class="m" style="left:99.00px;top:288.61px">062156</span>
<span class="m" style="left:189.00px;top:288.61px">/nd/</span>
<span class="m" style="left:309.00px;top:288.61px">/PBO/</span>
<span class="m" style="left:471.00px;top:288.61px">.WORD</span>
<span class="m" style="left:543.20px;top:288.61px">062156</span>
<span class="m" style="left:9.00px;top:317.11px">011604</span>
<span class="m" style="left:99.00px;top:317.11px">037400</span>
<span class="m" style="left:189.00px;top:317.11px">&lt;0&gt;/?/</span>
<span class="m" style="left:309.00px;top:317.11px">/JCH/</span>
<span class="m" style="left:471.00px;top:317.11px">.WORD</span>
<span class="m" style="left:543.20px;top:317.11px">037400</span>
<span class="m" style="left:9.00px;top:345.61px">011606</span>
<span class="m" style="left:99.00px;top:345.61px">042504</span>
<span class="m" style="left:189.00px;top:345.61px">/DE/</span>
<span class="m" style="left:309.00px;top:345.61px">/KCL/</span>
<span class="m" style="left:471.00px;top:345.61px">.WORD</span>
<span class="m" style="left:543.20px;top:345.61px">042504</span>
<span class="m" style="left:9.00px;top:374.11px">011610</span>
<span class="m" style="left:99.00px;top:374.11px">051523</span>
<span class="m" style="left:189.00px;top:374.11px">/SS/</span>
<span class="m" style="left:309.00px;top:374.11px">/MMK/</span>
<span class="m" style="left:471.00px;top:374.11px">.WORD</span>
<span class="m" style="left:543.20px;top:374.11px">051523</span>
<span class="m" style="left:9.00px;top:402.61px">011612</span>
<span class="m" style="left:99.00px;top:402.61px">053455</span>
<span class="m" style="left:189.00px;top:402.61px">/-W/</span>
<span class="m" style="left:309.00px;top:402.61px">/M77/</span>
<span class="m" style="left:471.00px;top:402.61px">.WORD</span>
<span class="m" style="left:543.20px;top:402.61px">053455</span>
<span class="m" style="left:9.00px;top:431.11px">011614</span>
<span class="m" style="left:99.00px;top:431.11px">042055</span>
<span class="m" style="left:189.00px;top:431.11px">/-D/</span>
<span class="m" style="left:309.00px;top:431.11px">/J6M/</span>
<span class="m" style="left:471.00px;top:431.11px">.WORD</span>
<span class="m" style="left:543.20px;top:431.11px">042055</span>
<span class="m" style="left:9.00px;top:459.61px">011616</span>
<span class="m" style="left:99.00px;top:459.61px">073145</span>
<span class="m" style="left:189.00px;top:459.61px">/ev/</span>
<span class="m" style="left:309.00px;top:459.61px">/R7?/</span>
<span class="m" style="left:471.00px;top:459.61px">.WORD</span>
<span class="m" style="left:543.20px;top:459.61px">073145</span>
<span class="m" style="left:9.00px;top:488.11px">011620</span>
<span class="m" style="left:99.00px;top:488.11px">061551</span>
<span class="m" style="left:189.00px;top:488.11px">/ic/</span>
<span class="m" style="left:309.00px;top:488.11px">/O6I/</span>
<span class="m" style="left:471.00px;top:488.11px">.WORD</span>
<span class="m" style="left:543.20px;top:488.11px">061551</span>
<span class="m" style="left:9.00px;top:516.61px">011622</span>
<span class="m" style="left:99.00px;top:516.61px">020145</span>
<span class="m" style="left:189.00px;top:516.61px">/e /</span>
<span class="m" style="left:309.00px;top:516.61px">/EGM/</span>
<span class="m" style="left:471.00px;top:516.61px">.WORD</span>
<span class="m" style="left:543.20px;top:516.61px">020145</span>
<span class="m" style="left:9.00px;top:545.11px">011624</span>
<span class="m" style="left:99.00px;top:545.11px">072546</span>
<span class="m" style="left:189.00px;top:545.11px">/fu/</span>
<span class="m" style="left:309.00px;top:545.11px">/R1N/</span>
<span class="m" style="left:471.00px;top:545.11px">.WORD</span>
<span class="m" style="left:543.20px;top:545.11px">072546</span>
<span class="m" style="left:9.00px;top:573.61px">011626</span>
<span class="m" style="left:99.00px;top:573.61px">066154</span>
<span class="m" style="left:189.00px;top:573.61px">/ll/</span>
<span class="m" style="left:309.00px;top:573.61px">/QM6/</span>
<span class="m" style="left:471.00px;top:573.61px">.WORD</span>
<span class="m" style="left:543.20px;top:573.61px">066154</span>
<span class="m" style="left:9.00px;top:602.11px">011630</span>
<span class="m" style="left:99.00px;top:602.11px">006400</span>
<span class="m" style="left:189.00px;top:602.11px">&lt;0&gt;&lt;CR&gt;</span>
<span class="m" style="left:309.00px;top:602.11px">/BCH/</span>
<span class="m" style="left:471.00px;top:602.11px">.WORD</span>
<span class="m" style="left:543.20px;top:602.11px">006400</span>
<span class="m" style="left:9.00px;top:630.61px">011632</span>
<span class="m" style="left:99.00px;top:630.61px">046412</span>
<span class="m" style="left:189.00px;top:630.61px">&lt;LF&gt;/M/</span>
<span class="m" style="left:309.00px;top:630.61px">/LMB/</span>
<span class="m" style="left:471.00px;top:630.61px">.WORD</span>
<span class="m" style="left:543.20px;top:630.61px">046412</span>
<span class="m" style="left:9.00px;top:659.11px">011634</span>
<span class="m" style="left:99.00px;top:659.11px">066545</span>
<span class="m" style="left:189.00px;top:659.11px">/em/</span>
<span class="m" style="left:309.00px;top:659.11px">/QTE/</span>
<span class="m" style="left:471.00px;top:659.11px">.WORD</span>
<span class="m" style="left:543.20px;top:659.11px">066545</span>
<span class="m" style="left:9.00px;top:687.61px">011636</span>
<span class="m" style="left:99.00px;top:687.61px">071157</span>
<span class="m" style="left:189.00px;top:687.61px">/or/</span>
<span class="m" style="left:309.00px;top:687.61px">/RLO/</span>
<span class="m" style="left:471.00px;top:687.61px">.WORD</span>
<span class="m" style="left:543.20px;top:687.61px">071157</span>
<span class="m" style="left:9.00px;top:716.11px">011640</span>
<span class="m" style="left:99.00px;top:716.11px">020171</span>
<span class="m" style="left:189.00px;top:716.11px">/y /</span>
<span class="m" style="left:309.00px;top:716.11px">/EG3/</span>
<span class="m" style="left:471.00px;top:716.11px">.WORD</span>
<span class="m" style="left:543.20px;top:716.11px">020171</span>
<span class="m" style="left:9.00px;top:744.61px">011642</span>
<span class="m" style="left:99.00px;top:744.61px">066551</span>
<span class="m" style="left:189.00px;top:744.61px">/im/</span>
<span class="m" style="left:309.00px;top:744.61px">/QTI/</span>
<span class="m" style="left:471.00px;top:744.61px">.WORD</span>
<span class="m" style="left:543.20px;top:744.61px">066551</span>
<span class="m" style="left:9.00px;top:773.11px">011644</span>
<span class="m" style="left:99.00px;top:773.11px">062555</span>
<span class="m" style="left:189.00px;top:773.11px">/me/</span>
<span class="m" style="left:309.00px;top:773.11px">/PIE/</span>
<span class="m" style="left:471.00px;top:773.11px">.WORD</span>
<span class="m" style="left:543.20px;top:773.11px">062555</span>
<span class="m" style="left:9.00px;top:801.61px">011646</span>
<span class="m" style="left:99.00px;top:801.61px">064544</span>
<span class="m" style="left:189.00px;top:801.61px">/di/</span>
<span class="m" style="left:309.00px;top:801.61px">/P4T/</span>
<span class="m" style="left:471.00px;top:801.61px">.WORD</span>
<span class="m" style="left:543.20px;top:801.61px">064544</span>
<span class="m" style="left:9.00px;top:830.11px">011650</span>
<span class="m" style="left:99.00px;top:830.11px">072141</span>
<span class="m" style="left:189.00px;top:830.11px">/at/</span>
<span class="m" style="left:309.00px;top:830.11px">/RX3/</span>
<span class="m" style="left:471.00px;top:830.11px">.WORD</span>
<span class="m" style="left:543.20px;top:830.11px">072141</span>
<span class="m" style="left:9.00px;top:858.61px">011652</span>
<span class="m" style="left:99.00px;top:858.61px">020145</span>
<span class="m" style="left:189.00px;top:858.61px">/e /</span>
<span class="m" style="left:309.00px;top:858.61px">/EGM/</span>
<span class="m" style="left:471.00px;top:858.61px">.WORD</span>
<span class="m" style="left:543.20px;top:858.61px">020145</span>
<span class="m" style="left:9.00px;top:887.11px">011654</span>
<span class="m" style="left:99.00px;top:887.11px">062145</span>
<span class="m" style="left:189.00px;top:887.11px">/ed/</span>
<span class="m" style="left:309.00px;top:887.11px">/PBU/</span>
<span class="m" style="left:471.00px;top:887.11px">.WORD</span>
<span class="m" style="left:543.20px;top:887.11px">062145</span>
<span class="m" style="left:9.00px;top:915.61px">011656</span>
<span class="m" style="left:99.00px;top:915.61px">072151</span>
<span class="m" style="left:189.00px;top:915.61px">/it/</span>
<span class="m" style="left:309.00px;top:915.61px">/RYA/</span>
<span class="m" style="left:471.00px;top:915.61px">.WORD</span>
<span class="m" style="left:543.20px;top:915.61px">072151</span>
<span class="m" style="left:9.00px;top:944.11px">011660</span>
<span class="m" style="left:99.00px;top:944.11px">071157</span>
<span class="m" style="left:189.00px;top:944.11px">/or/</span>
<span class="m" style="left:309.00px;top:944.11px">/RLO/</span>
<span class="m" style="left:471.00px;top:944.11px">.WORD</span>
<span class="m" style="left:543.20px;top:944.11px">071157</span>
<span class="m" style="left:9.00px;top:972.61px">011662</span>
<span class="m" style="left:99.00px;top:972.61px">000000</span>
<span class="m" style="left:189.00px;top:972.61px">&lt;0&gt;&lt;0&gt;</span>
<span class="m" style="left:309.00px;top:972.61px">/   /</span>
<span class="m" style="left:471.00px;top:972.61px">.WORD</span>
<span class="m" style="left:543.20px;top:972.61px">000000</span>
<span class="m" style="left:9.00px;top:1007.41px">011664</span>
<span class="m" style="left:99.00px;top:1007.41px">010146</span>
<span class="m" style="left:189.00px;top:1007.41px">/f/&lt;20&gt;</span>
<span class="m" style="left:309.00px;top:1007.41px">/BX8/</span>
<span class="m" style="left:399.00px;top:1001.01px">M11664:</span>
<span class="m" style="left:471.00px;top:1018.81px">MOV</span>
<span class="m" style="left:543.20px;top:1018.81px">R1, -(SP)</span>
<span class="m" style="left:9.00px;top:1043.11px">011666</span>
<span class="m" style="left:99.00px;top:1043.11px">010246</span>
<span class="m" style="left:189.00px;top:1043.11px">&lt;246&gt;&lt;20&gt;</span>
<span class="m" style="left:309.00px;top:1043.11px">/BZV/</span>
<span class="m" style="left:471.00px;top:1043.11px">MOV</span>
<span class="m" style="left:543.20px;top:1043.11px">R2, -(SP)</span>
<span class="m" style="left:9.00px;top:1071.61px">011670</span>
<span class="m" style="left:99.00px;top:1071.61px">010546</span>
<span class="m" style="left:189.00px;top:1071.61px">/f/&lt;21&gt;</span>
<span class="m" style="left:309.00px;top:1071.61px">/B1N/</span>
<span class="m" style="left:471.00px;top:1071.61px">MOV</span>
<span class="m" style="left:543.20px;top:1071.61px">R5, -(SP)</span>
<span class="m" style="left:9.00px;top:1100.11px">011672</span>
<span class="m" style="left:99.00px;top:1100.11px">004767</span>
<span class="m" style="left:189.00px;top:1100.11px">&lt;367&gt;&lt;HT&gt;</span>
<span class="m" style="left:309.00px;top:1100.11px">/AW1/</span>
<span class="m" style="left:471.00px;top:1100.11px">CALL</span>
<span class="m" style="left:543.20px;top:1100.11px">M13116</span>
<span class="m" style="left:9.00px;top:1128.61px">011674</span>
<span class="m" style="left:99.00px;top:1128.61px">001220</span>
<span class="m" style="left:189.00px;top:1128.61px">&lt;220&gt;&lt;2&gt;</span>
<span class="m" style="left:309.00px;top:1128.61px">/ PP/</span>
<span class="m" style="left:9.00px;top:1157.11px">011676</span>
<span class="m" style="left:99.00px;top:1157.11px">005002</span>
<span class="m" style="left:189.00px;top:1157.11px">&lt;2&gt;&lt;LF&gt;</span>
<span class="m" style="left:309.00px;top:1157.11px">/AXB/</span>
<span class="m" style="left:471.00px;top:1157.11px">CLR</span>
<span class="m" style="left:543.20px;top:1157.11px">R2</span>
<span class="m" style="left:9.00px;top:1191.91px">011700</span>
<span class="m" style="left:99.00px;top:1191.91px">010501</span>
<span class="m" style="left:189.00px;top:1191.91px">/A/&lt;21&gt;</span>
<span class="m" style="left:309.00px;top:1191.91px">/B0Q/</span>
<span class="m" style="left:399.00px;top:1185.51px">M11700:</span>
<span class="m" style="left:471.00px;top:1203.31px">MOV</span>
<span class="m" style="left:543.20px;top:1203.31px">R5, R1</span>
<span class="m" style="left:9.00px;top:1227.61px">011702</span>
<span class="m" style="left:99.00px;top:1227.61px">046201</span>
<span class="m" style="left:189.00px;top:1227.61px">&lt;201&gt;/L/</span>
<span class="m" style="left:309.00px;top:1227.61px">/LIY/</span>
<span class="m" style="left:471.00px;top:1227.61px">BIC</span>
<span class="m" style="left:543.20px;top:1227.61px">15122(R2), R1</span>
<span class="m" style="left:9.00px;top:1256.11px">011704</span>
<span class="m" style="left:99.00px;top:1256.11px">015122</span>
<span class="m" style="left:189.00px;top:1256.11px">/R/&lt;32&gt;</span>
<span class="m" style="left:309.00px;top:1256.11px">/DHR/</span>
<span class="m" style="left:9.00px;top:1284.61px">011706</span>
<span class="m" style="left:99.00px;top:1284.61px">020162</span>
<span class="m" style="left:189.00px;top:1284.61px">/r /</span>
<span class="m" style="left:309.00px;top:1284.61px">/EGZ/</span>
<span class="m" style="left:471.00px;top:1284.61px">CMP</span>
<span class="m" style="left:543.20px;top:1284.61px">R1, 15502(R2)</span>
<span class="m" style="left:9.00px;top:1313.11px">011710</span>
<span class="m" style="left:99.00px;top:1313.11px">015502</span>
<span class="m" style="left:189.00px;top:1313.11px">/B/&lt;ESC&gt;</span>
<span class="m" style="left:309.00px;top:1313.11px">/DNR/</span>
<span class="m" style="left:9.00px;top:1341.61px">011712</span>
<span class="m" style="left:99.00px;top:1341.61px">001402</span>
<span class="m" style="left:189.00px;top:1341.61px">&lt;2&gt;&lt;3&gt;</span>
<span class="m" style="left:309.00px;top:1341.61px">/ SJ/</span>
<span class="m" style="left:471.00px;top:1341.61px">BEQ</span>
<span class="m" style="left:543.20px;top:1341.61px">M11720</span>
<span class="m" style="left:9.00px;top:1370.11px">011714</span>
<span class="m" style="left:99.00px;top:1370.11px">005722</span>
<span class="m" style="left:189.00px;top:1370.11px">&lt;322&gt;&lt;VT&gt;</span>
<span class="m" style="left:309.00px;top:1370.11px">/A5Z/</span>
<span class="m" style="left:471.00px;top:1370.11px">TST</span>
<span class="m" style="left:543.20px;top:1370.11px">(R2)+</span>
<span class="m" style="left:9.00px;top:1398.61px">011716</span>
<span class="m" style="left:99.00px;top:1398.61px">000770</span>
<span class="m" style="left:189.00px;top:1398.61px">&lt;370&gt;&lt;1&gt;</span>
<span class="m" style="left:309.00px;top:1398.61px">/ LX/</span>
<span class="m" style="left:471.00px;top:1398.61px">BR</span>
<span class="m" style="left:543.20px;top:1398.61px">M11700</span>
</div>
<div class="a" style="left:2216.3px;top:48px;width:23.6px;height:1425.6px;border-left:1px solid #C4C4C4;border-right:1px solid #C4C4C4;border-top:1px solid #C4C4C4;border-bottom:1px solid #C4C4C4;background:#fff"></div>
<div class="a" style="left:2216.3px;top:72.6px;width:25.6px;height:1px;background:#C4C4C4"></div>
<svg class="a" style="left:2222.80px;top:56.95px" width="12" height="9" viewBox="0 0 12 9"><polygon points="0.00,5.70 5.60,0.00 11.20,5.70 11.20,8.70 5.60,3.00 0.00,8.70" fill="#6B6B6B"/></svg>
<div class="a" style="left:2216.3px;top:1450px;width:25.6px;height:1px;background:#C4C4C4"></div>
<svg class="a" style="left:2222.80px;top:1459.15px" width="12" height="9" viewBox="0 0 12 9"><polygon points="0.00,0.00 5.60,5.70 11.20,0.00 11.20,3.00 5.60,8.70 0.00,3.00" fill="#6B6B6B"/></svg>
<svg class="a" style="left:2216.3px;top:192.2px" width="26.6" height="13.6" viewBox="0 0 26.6 13.6"><rect x="2.4" y="1.5" width="22.7" height="10.6" fill="#DDDDDD" stroke="#B0B0B0" stroke-width="1"/></svg>
<div class="a" style="left:2244px;top:45px;width:1.6px;height:1434px;background:#C2C2C2;"></div>
<div class="a" style="left:2246px;top:45px;width:714px;height:1434px;overflow:hidden;">
<span class="m" style="left:9.00px;top:3.61px">000000</span>
<span class="m" style="left:99.00px;top:3.61px">000000</span>
<span class="m" style="left:189.00px;top:3.61px">&lt;0&gt;&lt;0&gt;</span>
<span class="m" style="left:309.00px;top:3.61px">/   /</span>
<span class="m" style="left:471.00px;top:3.61px">.WORD</span>
<span class="m" style="left:543.20px;top:3.61px">000000</span>
<span class="m" style="left:9.00px;top:32.11px">000002</span>
<span class="m" style="left:99.00px;top:32.11px">000000</span>
<span class="m" style="left:189.00px;top:32.11px">&lt;0&gt;&lt;0&gt;</span>
<span class="m" style="left:309.00px;top:32.11px">/   /</span>
<span class="m" style="left:471.00px;top:32.11px">.WORD</span>
<span class="m" style="left:543.20px;top:32.11px">000000</span>
<span class="m" style="left:9.00px;top:60.61px">000004</span>
<span class="m" style="left:99.00px;top:60.61px">000000</span>
<span class="m" style="left:189.00px;top:60.61px">&lt;0&gt;&lt;0&gt;</span>
<span class="m" style="left:309.00px;top:60.61px">/   /</span>
<span class="m" style="left:471.00px;top:60.61px">.WORD</span>
<span class="m" style="left:543.20px;top:60.61px">000000</span>
<span class="m" style="left:9.00px;top:89.11px">000006</span>
<span class="m" style="left:99.00px;top:89.11px">000000</span>
<span class="m" style="left:189.00px;top:89.11px">&lt;0&gt;&lt;0&gt;</span>
<span class="m" style="left:309.00px;top:89.11px">/   /</span>
<span class="m" style="left:471.00px;top:89.11px">.WORD</span>
<span class="m" style="left:543.20px;top:89.11px">000000</span>
<span class="m" style="left:9.00px;top:117.61px">000010</span>
<span class="m" style="left:99.00px;top:117.61px">000000</span>
<span class="m" style="left:189.00px;top:117.61px">&lt;0&gt;&lt;0&gt;</span>
<span class="m" style="left:309.00px;top:117.61px">/   /</span>
<span class="m" style="left:471.00px;top:117.61px">.WORD</span>
<span class="m" style="left:543.20px;top:117.61px">000000</span>
<span class="m" style="left:9.00px;top:146.11px">000012</span>
<span class="m" style="left:99.00px;top:146.11px">000000</span>
<span class="m" style="left:189.00px;top:146.11px">&lt;0&gt;&lt;0&gt;</span>
<span class="m" style="left:309.00px;top:146.11px">/   /</span>
<span class="m" style="left:471.00px;top:146.11px">.WORD</span>
<span class="m" style="left:543.20px;top:146.11px">000000</span>
<span class="m" style="left:9.00px;top:174.61px">000014</span>
<span class="m" style="left:99.00px;top:174.61px">000000</span>
<span class="m" style="left:189.00px;top:174.61px">&lt;0&gt;&lt;0&gt;</span>
<span class="m" style="left:309.00px;top:174.61px">/   /</span>
<span class="m" style="left:471.00px;top:174.61px">.WORD</span>
<span class="m" style="left:543.20px;top:174.61px">000000</span>
<span class="m" style="left:9.00px;top:203.11px">000016</span>
<span class="m" style="left:99.00px;top:203.11px">000000</span>
<span class="m" style="left:189.00px;top:203.11px">&lt;0&gt;&lt;0&gt;</span>
<span class="m" style="left:309.00px;top:203.11px">/   /</span>
<span class="m" style="left:471.00px;top:203.11px">.WORD</span>
<span class="m" style="left:543.20px;top:203.11px">000000</span>
<span class="m" style="left:9.00px;top:231.61px">000020</span>
<span class="m" style="left:99.00px;top:231.61px">000000</span>
<span class="m" style="left:189.00px;top:231.61px">&lt;0&gt;&lt;0&gt;</span>
<span class="m" style="left:309.00px;top:231.61px">/   /</span>
<span class="m" style="left:471.00px;top:231.61px">.WORD</span>
<span class="m" style="left:543.20px;top:231.61px">000000</span>
<span class="m" style="left:9.00px;top:260.11px">000022</span>
<span class="m" style="left:99.00px;top:260.11px">000000</span>
<span class="m" style="left:189.00px;top:260.11px">&lt;0&gt;&lt;0&gt;</span>
<span class="m" style="left:309.00px;top:260.11px">/   /</span>
<span class="m" style="left:471.00px;top:260.11px">.WORD</span>
<span class="m" style="left:543.20px;top:260.11px">000000</span>
<span class="m" style="left:9.00px;top:288.61px">000024</span>
<span class="m" style="left:99.00px;top:288.61px">000000</span>
<span class="m" style="left:189.00px;top:288.61px">&lt;0&gt;&lt;0&gt;</span>
<span class="m" style="left:309.00px;top:288.61px">/   /</span>
<span class="m" style="left:471.00px;top:288.61px">.WORD</span>
<span class="m" style="left:543.20px;top:288.61px">000000</span>
<span class="m" style="left:9.00px;top:317.11px">000026</span>
<span class="m" style="left:99.00px;top:317.11px">000000</span>
<span class="m" style="left:189.00px;top:317.11px">&lt;0&gt;&lt;0&gt;</span>
<span class="m" style="left:309.00px;top:317.11px">/   /</span>
<span class="m" style="left:471.00px;top:317.11px">.WORD</span>
<span class="m" style="left:543.20px;top:317.11px">000000</span>
<span class="m" style="left:9.00px;top:345.61px">000030</span>
<span class="m" style="left:99.00px;top:345.61px">000000</span>
<span class="m" style="left:189.00px;top:345.61px">&lt;0&gt;&lt;0&gt;</span>
<span class="m" style="left:309.00px;top:345.61px">/   /</span>
<span class="m" style="left:471.00px;top:345.61px">.WORD</span>
<span class="m" style="left:543.20px;top:345.61px">000000</span>
<span class="m" style="left:9.00px;top:374.11px">000032</span>
<span class="m" style="left:99.00px;top:374.11px">000000</span>
<span class="m" style="left:189.00px;top:374.11px">&lt;0&gt;&lt;0&gt;</span>
<span class="m" style="left:309.00px;top:374.11px">/   /</span>
<span class="m" style="left:471.00px;top:374.11px">.WORD</span>
<span class="m" style="left:543.20px;top:374.11px">000000</span>
<span class="m" style="left:9.00px;top:402.61px">000034</span>
<span class="m" style="left:99.00px;top:402.61px">000000</span>
<span class="m" style="left:189.00px;top:402.61px">&lt;0&gt;&lt;0&gt;</span>
<span class="m" style="left:309.00px;top:402.61px">/   /</span>
<span class="m" style="left:471.00px;top:402.61px">.WORD</span>
<span class="m" style="left:543.20px;top:402.61px">000000</span>
<span class="m" style="left:9.00px;top:431.11px">000036</span>
<span class="m" style="left:99.00px;top:431.11px">000000</span>
<span class="m" style="left:189.00px;top:431.11px">&lt;0&gt;&lt;0&gt;</span>
<span class="m" style="left:309.00px;top:431.11px">/   /</span>
<span class="m" style="left:471.00px;top:431.11px">.WORD</span>
<span class="m" style="left:543.20px;top:431.11px">000000</span>
<span class="m" style="left:9.00px;top:459.61px">000040</span>
<span class="m" style="left:99.00px;top:459.61px">001000</span>
<span class="m" style="left:189.00px;top:459.61px">&lt;0&gt;&lt;2&gt;</span>
<span class="m" style="left:309.00px;top:459.61px">/ L2/</span>
<span class="m" style="left:471.00px;top:459.61px">.WORD</span>
<span class="m" style="left:543.20px;top:459.61px">001000</span>
<span class="m" style="left:9.00px;top:488.11px">000042</span>
<span class="m" style="left:99.00px;top:488.11px">001000</span>
<span class="m" style="left:189.00px;top:488.11px">&lt;0&gt;&lt;2&gt;</span>
<span class="m" style="left:309.00px;top:488.11px">/ L2/</span>
<span class="m" style="left:471.00px;top:488.11px">.WORD</span>
<span class="m" style="left:543.20px;top:488.11px">001000</span>
<span class="m" style="left:9.00px;top:522.91px">000044</span>
<span class="m" style="left:99.00px;top:522.91px">000000</span>
<span class="m" style="left:189.00px;top:522.91px">&lt;0&gt;&lt;0&gt;</span>
<span class="m" style="left:309.00px;top:522.91px">/   /</span>
<span class="m" style="left:399.00px;top:516.51px">JSW:</span>
<span class="m" style="left:471.00px;top:534.31px">.WORD</span>
<span class="m" style="left:543.20px;top:534.31px">000000</span>
<span class="m" style="left:9.00px;top:558.61px">000046</span>
<span class="m" style="left:99.00px;top:558.61px">000000</span>
<span class="m" style="left:189.00px;top:558.61px">&lt;0&gt;&lt;0&gt;</span>
<span class="m" style="left:309.00px;top:558.61px">/   /</span>
<span class="m" style="left:471.00px;top:558.61px">.WORD</span>
<span class="m" style="left:543.20px;top:558.61px">000000</span>
<span class="m" style="left:9.00px;top:587.11px">000050</span>
<span class="m" style="left:99.00px;top:587.11px">021640</span>
<span class="m" style="left:189.00px;top:587.11px">&lt;240&gt;/#/</span>
<span class="m" style="left:309.00px;top:587.11px">/E. /</span>
<span class="m" style="left:471.00px;top:587.11px">.WORD</span>
<span class="m" style="left:543.20px;top:587.11px">021640</span>
<span class="m" style="left:9.00px;top:615.61px">000052</span>
<span class="m" style="left:99.00px;top:615.61px">000000</span>
<span class="m" style="left:189.00px;top:615.61px">&lt;0&gt;&lt;0&gt;</span>
<span class="m" style="left:309.00px;top:615.61px">/   /</span>
<span class="m" style="left:471.00px;top:615.61px">.WORD</span>
<span class="m" style="left:543.20px;top:615.61px">000000</span>
<span class="m" style="left:9.00px;top:644.11px">000054</span>
<span class="m" style="left:99.00px;top:644.11px">000000</span>
<span class="m" style="left:189.00px;top:644.11px">&lt;0&gt;&lt;0&gt;</span>
<span class="m" style="left:309.00px;top:644.11px">/   /</span>
<span class="m" style="left:471.00px;top:644.11px">.WORD</span>
<span class="m" style="left:543.20px;top:644.11px">000000</span>
<span class="m" style="left:9.00px;top:672.61px">000056</span>
<span class="m" style="left:99.00px;top:672.61px">000000</span>
<span class="m" style="left:189.00px;top:672.61px">&lt;0&gt;&lt;0&gt;</span>
<span class="m" style="left:309.00px;top:672.61px">/   /</span>
<span class="m" style="left:471.00px;top:672.61px">.WORD</span>
<span class="m" style="left:543.20px;top:672.61px">000000</span>
<span class="m" style="left:9.00px;top:701.11px">000060</span>
<span class="m" style="left:99.00px;top:701.11px">000000</span>
<span class="m" style="left:189.00px;top:701.11px">&lt;0&gt;&lt;0&gt;</span>
<span class="m" style="left:309.00px;top:701.11px">/   /</span>
<span class="m" style="left:471.00px;top:701.11px">.WORD</span>
<span class="m" style="left:543.20px;top:701.11px">000000</span>
<span class="m" style="left:9.00px;top:729.61px">000062</span>
<span class="m" style="left:99.00px;top:729.61px">000000</span>
<span class="m" style="left:189.00px;top:729.61px">&lt;0&gt;&lt;0&gt;</span>
<span class="m" style="left:309.00px;top:729.61px">/   /</span>
<span class="m" style="left:471.00px;top:729.61px">.WORD</span>
<span class="m" style="left:543.20px;top:729.61px">000000</span>
<span class="m" style="left:9.00px;top:758.11px">000064</span>
<span class="m" style="left:99.00px;top:758.11px">000000</span>
<span class="m" style="left:189.00px;top:758.11px">&lt;0&gt;&lt;0&gt;</span>
<span class="m" style="left:309.00px;top:758.11px">/   /</span>
<span class="m" style="left:471.00px;top:758.11px">.WORD</span>
<span class="m" style="left:543.20px;top:758.11px">000000</span>
<span class="m" style="left:9.00px;top:786.61px">000066</span>
<span class="m" style="left:99.00px;top:786.61px">000000</span>
<span class="m" style="left:189.00px;top:786.61px">&lt;0&gt;&lt;0&gt;</span>
<span class="m" style="left:309.00px;top:786.61px">/   /</span>
<span class="m" style="left:471.00px;top:786.61px">.WORD</span>
<span class="m" style="left:543.20px;top:786.61px">000000</span>
<span class="m" style="left:9.00px;top:815.11px">000070</span>
<span class="m" style="left:99.00px;top:815.11px">000000</span>
<span class="m" style="left:189.00px;top:815.11px">&lt;0&gt;&lt;0&gt;</span>
<span class="m" style="left:309.00px;top:815.11px">/   /</span>
<span class="m" style="left:471.00px;top:815.11px">.WORD</span>
<span class="m" style="left:543.20px;top:815.11px">000000</span>
<span class="m" style="left:9.00px;top:843.61px">000072</span>
<span class="m" style="left:99.00px;top:843.61px">000000</span>
<span class="m" style="left:189.00px;top:843.61px">&lt;0&gt;&lt;0&gt;</span>
<span class="m" style="left:309.00px;top:843.61px">/   /</span>
<span class="m" style="left:471.00px;top:843.61px">.WORD</span>
<span class="m" style="left:543.20px;top:843.61px">000000</span>
<span class="m" style="left:9.00px;top:872.11px">000074</span>
<span class="m" style="left:99.00px;top:872.11px">000000</span>
<span class="m" style="left:189.00px;top:872.11px">&lt;0&gt;&lt;0&gt;</span>
<span class="m" style="left:309.00px;top:872.11px">/   /</span>
<span class="m" style="left:471.00px;top:872.11px">.WORD</span>
<span class="m" style="left:543.20px;top:872.11px">000000</span>
<span class="m" style="left:9.00px;top:900.61px">000076</span>
<span class="m" style="left:99.00px;top:900.61px">000000</span>
<span class="m" style="left:189.00px;top:900.61px">&lt;0&gt;&lt;0&gt;</span>
<span class="m" style="left:309.00px;top:900.61px">/   /</span>
<span class="m" style="left:471.00px;top:900.61px">.WORD</span>
<span class="m" style="left:543.20px;top:900.61px">000000</span>
<span class="m" style="left:9.00px;top:929.11px">000100</span>
<span class="m" style="left:99.00px;top:929.11px">000000</span>
<span class="m" style="left:189.00px;top:929.11px">&lt;0&gt;&lt;0&gt;</span>
<span class="m" style="left:309.00px;top:929.11px">/   /</span>
<span class="m" style="left:471.00px;top:929.11px">.WORD</span>
<span class="m" style="left:543.20px;top:929.11px">000000</span>
<span class="m" style="left:9.00px;top:957.61px">000102</span>
<span class="m" style="left:99.00px;top:957.61px">000000</span>
<span class="m" style="left:189.00px;top:957.61px">&lt;0&gt;&lt;0&gt;</span>
<span class="m" style="left:309.00px;top:957.61px">/   /</span>
<span class="m" style="left:471.00px;top:957.61px">.WORD</span>
<span class="m" style="left:543.20px;top:957.61px">000000</span>
<span class="m" style="left:9.00px;top:986.11px">000104</span>
<span class="m" style="left:99.00px;top:986.11px">000000</span>
<span class="m" style="left:189.00px;top:986.11px">&lt;0&gt;&lt;0&gt;</span>
<span class="m" style="left:309.00px;top:986.11px">/   /</span>
<span class="m" style="left:471.00px;top:986.11px">.WORD</span>
<span class="m" style="left:543.20px;top:986.11px">000000</span>
<span class="m" style="left:9.00px;top:1014.61px">000106</span>
<span class="m" style="left:99.00px;top:1014.61px">000000</span>
<span class="m" style="left:189.00px;top:1014.61px">&lt;0&gt;&lt;0&gt;</span>
<span class="m" style="left:309.00px;top:1014.61px">/   /</span>
<span class="m" style="left:471.00px;top:1014.61px">.WORD</span>
<span class="m" style="left:543.20px;top:1014.61px">000000</span>
<span class="m" style="left:9.00px;top:1043.11px">000110</span>
<span class="m" style="left:99.00px;top:1043.11px">000000</span>
<span class="m" style="left:189.00px;top:1043.11px">&lt;0&gt;&lt;0&gt;</span>
<span class="m" style="left:309.00px;top:1043.11px">/   /</span>
<span class="m" style="left:471.00px;top:1043.11px">.WORD</span>
<span class="m" style="left:543.20px;top:1043.11px">000000</span>
<span class="m" style="left:9.00px;top:1071.61px">000112</span>
<span class="m" style="left:99.00px;top:1071.61px">000000</span>
<span class="m" style="left:189.00px;top:1071.61px">&lt;0&gt;&lt;0&gt;</span>
<span class="m" style="left:309.00px;top:1071.61px">/   /</span>
<span class="m" style="left:471.00px;top:1071.61px">.WORD</span>
<span class="m" style="left:543.20px;top:1071.61px">000000</span>
<span class="m" style="left:9.00px;top:1100.11px">000114</span>
<span class="m" style="left:99.00px;top:1100.11px">000000</span>
<span class="m" style="left:189.00px;top:1100.11px">&lt;0&gt;&lt;0&gt;</span>
<span class="m" style="left:309.00px;top:1100.11px">/   /</span>
<span class="m" style="left:471.00px;top:1100.11px">.WORD</span>
<span class="m" style="left:543.20px;top:1100.11px">000000</span>
<span class="m" style="left:9.00px;top:1128.61px">000116</span>
<span class="m" style="left:99.00px;top:1128.61px">000000</span>
<span class="m" style="left:189.00px;top:1128.61px">&lt;0&gt;&lt;0&gt;</span>
<span class="m" style="left:309.00px;top:1128.61px">/   /</span>
<span class="m" style="left:471.00px;top:1128.61px">.WORD</span>
<span class="m" style="left:543.20px;top:1128.61px">000000</span>
<span class="m" style="left:9.00px;top:1157.11px">000120</span>
<span class="m" style="left:99.00px;top:1157.11px">000000</span>
<span class="m" style="left:189.00px;top:1157.11px">&lt;0&gt;&lt;0&gt;</span>
<span class="m" style="left:309.00px;top:1157.11px">/   /</span>
<span class="m" style="left:471.00px;top:1157.11px">.WORD</span>
<span class="m" style="left:543.20px;top:1157.11px">000000</span>
<span class="m" style="left:9.00px;top:1185.61px">000122</span>
<span class="m" style="left:99.00px;top:1185.61px">000000</span>
<span class="m" style="left:189.00px;top:1185.61px">&lt;0&gt;&lt;0&gt;</span>
<span class="m" style="left:309.00px;top:1185.61px">/   /</span>
<span class="m" style="left:471.00px;top:1185.61px">.WORD</span>
<span class="m" style="left:543.20px;top:1185.61px">000000</span>
<span class="m" style="left:9.00px;top:1214.11px">000124</span>
<span class="m" style="left:99.00px;top:1214.11px">000000</span>
<span class="m" style="left:189.00px;top:1214.11px">&lt;0&gt;&lt;0&gt;</span>
<span class="m" style="left:309.00px;top:1214.11px">/   /</span>
<span class="m" style="left:471.00px;top:1214.11px">.WORD</span>
<span class="m" style="left:543.20px;top:1214.11px">000000</span>
<span class="m" style="left:9.00px;top:1242.61px">000126</span>
<span class="m" style="left:99.00px;top:1242.61px">000000</span>
<span class="m" style="left:189.00px;top:1242.61px">&lt;0&gt;&lt;0&gt;</span>
<span class="m" style="left:309.00px;top:1242.61px">/   /</span>
<span class="m" style="left:471.00px;top:1242.61px">.WORD</span>
<span class="m" style="left:543.20px;top:1242.61px">000000</span>
<span class="m" style="left:9.00px;top:1271.11px">000130</span>
<span class="m" style="left:99.00px;top:1271.11px">000000</span>
<span class="m" style="left:189.00px;top:1271.11px">&lt;0&gt;&lt;0&gt;</span>
<span class="m" style="left:309.00px;top:1271.11px">/   /</span>
<span class="m" style="left:471.00px;top:1271.11px">.WORD</span>
<span class="m" style="left:543.20px;top:1271.11px">000000</span>
<span class="m" style="left:9.00px;top:1299.61px">000132</span>
<span class="m" style="left:99.00px;top:1299.61px">000000</span>
<span class="m" style="left:189.00px;top:1299.61px">&lt;0&gt;&lt;0&gt;</span>
<span class="m" style="left:309.00px;top:1299.61px">/   /</span>
<span class="m" style="left:471.00px;top:1299.61px">.WORD</span>
<span class="m" style="left:543.20px;top:1299.61px">000000</span>
<span class="m" style="left:9.00px;top:1328.11px">000134</span>
<span class="m" style="left:99.00px;top:1328.11px">000000</span>
<span class="m" style="left:189.00px;top:1328.11px">&lt;0&gt;&lt;0&gt;</span>
<span class="m" style="left:309.00px;top:1328.11px">/   /</span>
<span class="m" style="left:471.00px;top:1328.11px">.WORD</span>
<span class="m" style="left:543.20px;top:1328.11px">000000</span>
<span class="m" style="left:9.00px;top:1356.61px">000136</span>
<span class="m" style="left:99.00px;top:1356.61px">000000</span>
<span class="m" style="left:189.00px;top:1356.61px">&lt;0&gt;&lt;0&gt;</span>
<span class="m" style="left:309.00px;top:1356.61px">/   /</span>
<span class="m" style="left:471.00px;top:1356.61px">.WORD</span>
<span class="m" style="left:543.20px;top:1356.61px">000000</span>
<span class="m" style="left:9.00px;top:1385.11px">000140</span>
<span class="m" style="left:99.00px;top:1385.11px">000000</span>
<span class="m" style="left:189.00px;top:1385.11px">&lt;0&gt;&lt;0&gt;</span>
<span class="m" style="left:309.00px;top:1385.11px">/   /</span>
<span class="m" style="left:471.00px;top:1385.11px">.WORD</span>
<span class="m" style="left:543.20px;top:1385.11px">000000</span>
<span class="m" style="left:9.00px;top:1413.61px">000142</span>
<span class="m" style="left:99.00px;top:1413.61px">000000</span>
<span class="m" style="left:189.00px;top:1413.61px">&lt;0&gt;&lt;0&gt;</span>
<span class="m" style="left:309.00px;top:1413.61px">/   /</span>
<span class="m" style="left:471.00px;top:1413.61px">.WORD</span>
<span class="m" style="left:543.20px;top:1413.61px">000000</span>
<span class="m" style="left:9.00px;top:1442.11px">000144</span>
<span class="m" style="left:99.00px;top:1442.11px">000000</span>
<span class="m" style="left:189.00px;top:1442.11px">&lt;0&gt;&lt;0&gt;</span>
<span class="m" style="left:309.00px;top:1442.11px">/   /</span>
<span class="m" style="left:471.00px;top:1442.11px">.WORD</span>
<span class="m" style="left:543.20px;top:1442.11px">000000</span>
</div>
<div class="a" style="left:2960.3px;top:48px;width:23.5px;height:1425.4px;border-left:1px solid #C4C4C4;border-right:1px solid #C4C4C4;border-top:1px solid #C4C4C4;border-bottom:1px solid #C4C4C4;background:#fff"></div>
<div class="a" style="left:2960.3px;top:72.5px;width:25.5px;height:1px;background:#C4C4C4"></div>
<svg class="a" style="left:2967.80px;top:56.95px" width="12" height="9" viewBox="0 0 12 9"><polygon points="0.00,5.70 5.60,0.00 11.20,5.70 11.20,8.70 5.60,3.00 0.00,8.70" fill="#6B6B6B"/></svg>
<div class="a" style="left:2960.3px;top:1449.9px;width:25.5px;height:1px;background:#C4C4C4"></div>
<svg class="a" style="left:2967.80px;top:1458.95px" width="12" height="9" viewBox="0 0 12 9"><polygon points="0.00,0.00 5.60,5.70 11.20,0.00 11.20,3.00 5.60,8.70 0.00,3.00" fill="#6B6B6B"/></svg>
<svg class="a" style="left:2960.3px;top:73.4px" width="26.5" height="13.3" viewBox="0 0 26.5 13.3"><rect x="2.4" y="1.5" width="22.6" height="10.3" fill="#DDDDDD" stroke="#B0B0B0" stroke-width="1"/></svg>
<div class="a" style="left:11px;top:1490px;width:1460px;height:34.5px;overflow:hidden;">
<span class="m" style="left:10.00px;top:-5.24px">001172</span>
<span class="m" style="left:100.00px;top:-5.24px">012760</span>
<span class="m" style="left:190.00px;top:-5.24px">&lt;360&gt;&lt;25&gt;</span>
<span class="m" style="left:310.00px;top:-5.24px">/CTP/</span>
<span class="m" style="left:472.00px;top:-5.24px">MOV</span>
<span class="m" style="left:544.20px;top:-5.24px">#20462, 2(R0)</span>
<span class="m" style="left:10.00px;top:23.26px">001174</span>
<span class="m" style="left:100.00px;top:23.26px">020462</span>
<span class="m" style="left:190.00px;top:23.26px">/2!/</span>
<span class="m" style="left:310.00px;top:23.26px">/ELR/</span>
</div>
<div class="a" style="left:11px;top:1527px;width:1489px;height:1px;background:#C6C6C6;"></div>
<div class="a" style="left:1471px;top:1490px;width:24px;height:33.6px;border-left:1px solid #C4C4C4;border-right:1px solid #C4C4C4;border-bottom:1px solid #C4C4C4;background:#fff"></div>
<div class="a" style="left:1471px;top:1498.6px;width:26px;height:1px;background:#C4C4C4"></div>
<svg class="a" style="left:1478.75px;top:1508.15px" width="12" height="9" viewBox="0 0 12 9"><polygon points="0.00,0.00 5.60,5.70 11.20,0.00 11.20,3.00 5.60,8.70 0.00,3.00" fill="#6B6B6B"/></svg>
<div class="a" style="left:1500px;top:1490px;width:1px;height:75px;background:#BDBDBD;"></div>
<div class="a" style="left:1499px;top:1490px;width:1px;height:37px;background:#CCCCCC;"></div>
<div class="a" style="left:1501px;top:1490px;width:715px;height:71.8px;overflow:hidden;">
<span class="m" style="left:9.00px;top:-16.64px">011706</span>
<span class="m" style="left:99.00px;top:-16.64px">020162</span>
<span class="m" style="left:189.00px;top:-16.64px">/r /</span>
<span class="m" style="left:309.00px;top:-16.64px">/EGZ/</span>
<span class="m" style="left:471.00px;top:-16.64px">CMP</span>
<span class="m" style="left:543.20px;top:-16.64px">R1, 15502(R2)</span>
<span class="m" style="left:9.00px;top:11.86px">011710</span>
<span class="m" style="left:99.00px;top:11.86px">015502</span>
<span class="m" style="left:189.00px;top:11.86px">/B/&lt;ESC&gt;</span>
<span class="m" style="left:309.00px;top:11.86px">/DNR/</span>
<span class="m" style="left:9.00px;top:40.36px">011712</span>
<span class="m" style="left:99.00px;top:40.36px">001402</span>
<span class="m" style="left:189.00px;top:40.36px">&lt;2&gt;&lt;3&gt;</span>
<span class="m" style="left:309.00px;top:40.36px">/ SJ/</span>
<span class="m" style="left:471.00px;top:40.36px">BEQ</span>
<span class="m" style="left:543.20px;top:40.36px">M11720</span>
<span class="m" style="left:9.00px;top:68.86px">011714</span>
<span class="m" style="left:99.00px;top:68.86px">005722</span>
<span class="m" style="left:189.00px;top:68.86px">&lt;322&gt;&lt;VT&gt;</span>
<span class="m" style="left:309.00px;top:68.86px">/A5Z/</span>
<span class="m" style="left:471.00px;top:68.86px">TST</span>
<span class="m" style="left:543.20px;top:68.86px">(R2)+</span>
</div>
<div class="a" style="left:2216.3px;top:1490px;width:23.6px;height:70.4px;border-left:1px solid #C4C4C4;border-right:1px solid #C4C4C4;border-bottom:1px solid #C4C4C4;background:#fff"></div>
<div class="a" style="left:2216.3px;top:1535.8px;width:25.6px;height:1px;background:#C4C4C4"></div>
<svg class="a" style="left:2222.80px;top:1544.95px" width="12" height="9" viewBox="0 0 12 9"><polygon points="0.00,0.00 5.60,5.70 11.20,0.00 11.20,3.00 5.60,8.70 0.00,3.00" fill="#6B6B6B"/></svg>
<div class="a" style="left:2244px;top:1490px;width:1.6px;height:75px;background:#C2C2C2;"></div>
<div class="a" style="left:2246px;top:1490px;width:714px;height:72.5px;overflow:hidden;">
<span class="m" style="left:9.00px;top:-2.24px">000144</span>
<span class="m" style="left:99.00px;top:-2.24px">000000</span>
<span class="m" style="left:189.00px;top:-2.24px">&lt;0&gt;&lt;0&gt;</span>
<span class="m" style="left:309.00px;top:-2.24px">/   /</span>
<span class="m" style="left:471.00px;top:-2.24px">.WORD</span>
<span class="m" style="left:543.20px;top:-2.24px">000000</span>
<span class="m" style="left:9.00px;top:26.26px">000146</span>
<span class="m" style="left:99.00px;top:26.26px">000000</span>
<span class="m" style="left:189.00px;top:26.26px">&lt;0&gt;&lt;0&gt;</span>
<span class="m" style="left:309.00px;top:26.26px">/   /</span>
<span class="m" style="left:471.00px;top:26.26px">.WORD</span>
<span class="m" style="left:543.20px;top:26.26px">000000</span>
<span class="m" style="left:9.00px;top:54.76px">000150</span>
<span class="m" style="left:99.00px;top:54.76px">000000</span>
<span class="m" style="left:189.00px;top:54.76px">&lt;0&gt;&lt;0&gt;</span>
<span class="m" style="left:309.00px;top:54.76px">/   /</span>
<span class="m" style="left:471.00px;top:54.76px">.WORD</span>
<span class="m" style="left:543.20px;top:54.76px">000000</span>
<span class="m" style="left:9.00px;top:83.26px">000152</span>
<span class="m" style="left:99.00px;top:83.26px">000000</span>
<span class="m" style="left:189.00px;top:83.26px">&lt;0&gt;&lt;0&gt;</span>
<span class="m" style="left:309.00px;top:83.26px">/   /</span>
<span class="m" style="left:471.00px;top:83.26px">.WORD</span>
<span class="m" style="left:543.20px;top:83.26px">000000</span>
</div>
<div class="a" style="left:2960.3px;top:1490px;width:23.5px;height:70.4px;border-left:1px solid #C4C4C4;border-right:1px solid #C4C4C4;border-bottom:1px solid #C4C4C4;background:#fff"></div>
<div class="a" style="left:2960.3px;top:1535.9px;width:25.5px;height:1px;background:#C4C4C4"></div>
<svg class="a" style="left:2967.80px;top:1544.95px" width="12" height="9" viewBox="0 0 12 9"><polygon points="0.00,0.00 5.60,5.70 11.20,0.00 11.20,3.00 5.60,8.70 0.00,3.00" fill="#6B6B6B"/></svg>
</body></html>
